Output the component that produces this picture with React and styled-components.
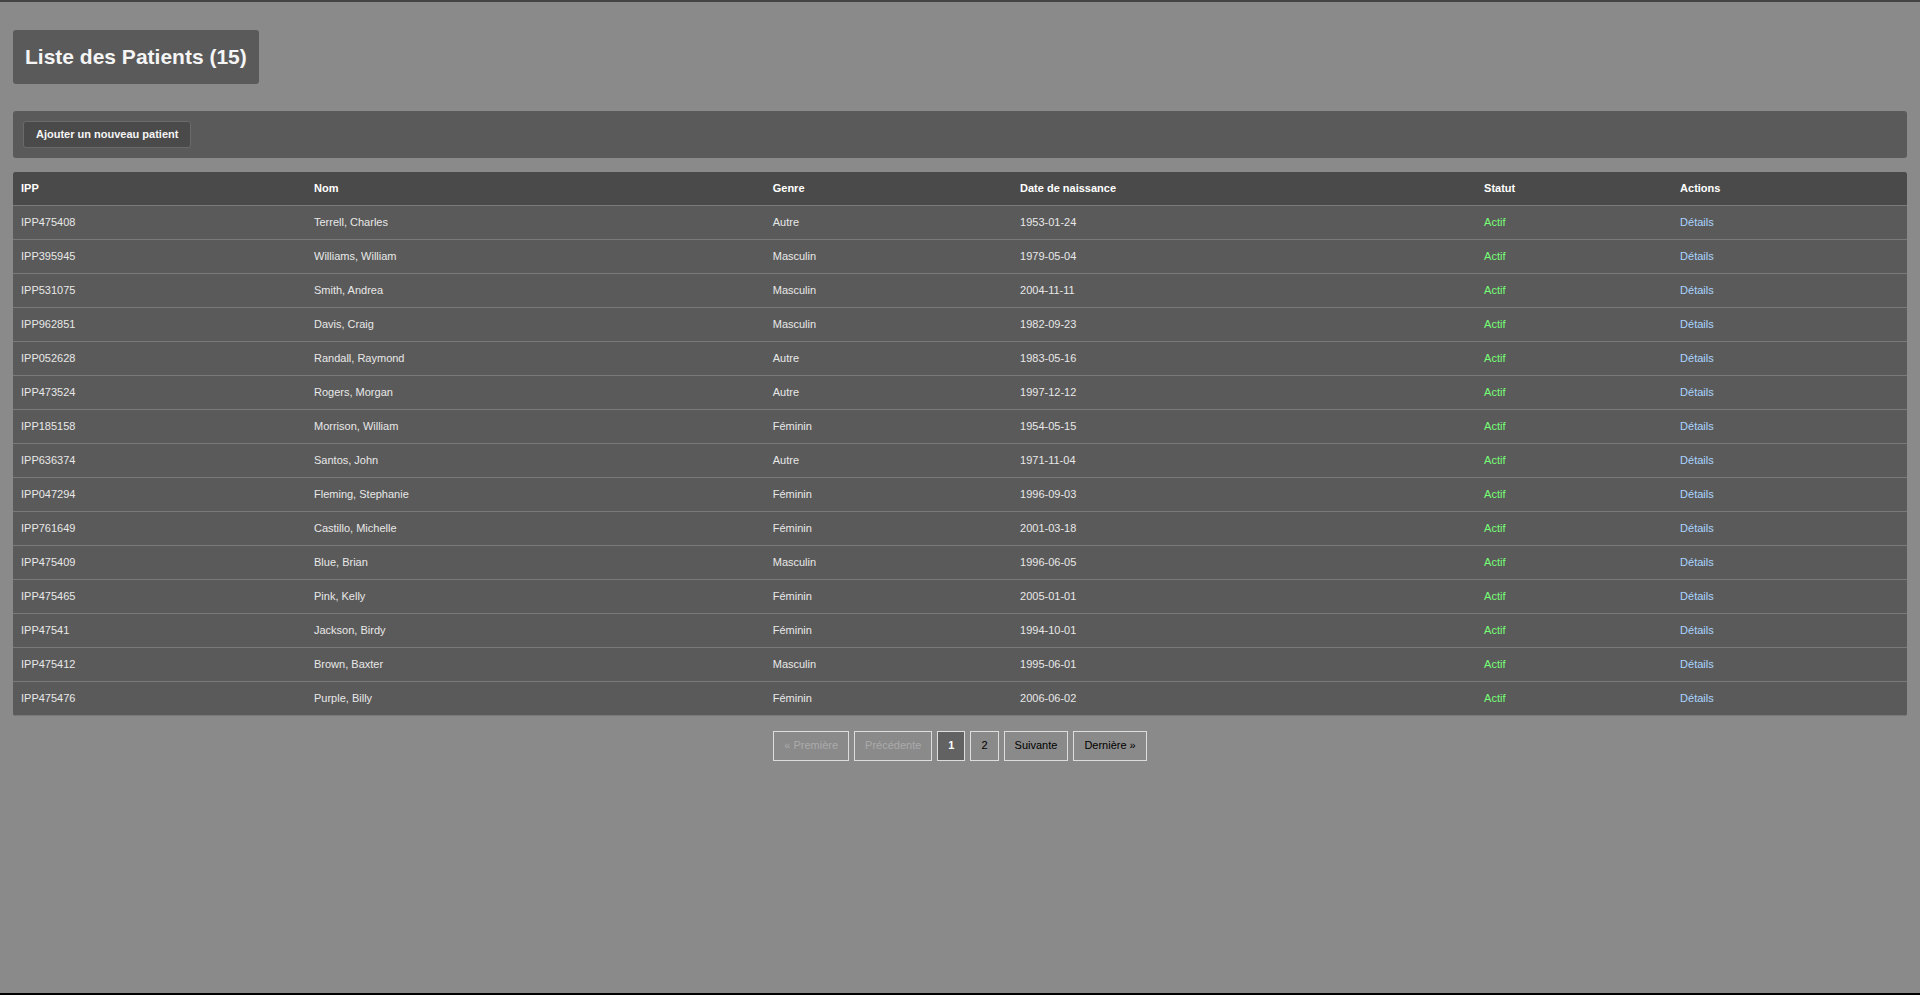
import React from "react";
import styled, { createGlobalStyle } from "styled-components";

const GlobalStyle = createGlobalStyle`
  *, *::before, *::after { box-sizing: border-box; }
  body {
    margin: 0;
    background: #8a8a8a;
    color: #e8e8e8;
    font-family: "Liberation Sans", Arial, sans-serif;
    font-size: 11px;
    line-height: 13px;
  }
`;

const Page = styled.div`
  min-height: 100vh;
  padding: 28px 13px 0;
  border-top: 2px solid #444444;
  border-bottom: 2px solid #000000;
`;

const Title = styled.h1`
  width: fit-content;
  margin: 0 0 27px;
  padding: 15px 12px;
  border-radius: 3px;
  background: #5a5a5a;
  color: #f5f5f5;
  font-size: 21px;
  line-height: 24px;
`;

const Toolbar = styled.div`
  display: flex;
  margin-bottom: 14px;
  padding: 10px;
  border-radius: 3px;
  background: #5a5a5a;
`;

const AddButton = styled.button`
  padding: 6px 12px;
  border: 1px solid #6a6a6a;
  border-radius: 3px;
  background: #4a4a4a;
  color: #f5f5f5;
  font: inherit;
  font-weight: bold;
`;

const Table = styled.table`
  width: 100%;
  table-layout: fixed;
  border-spacing: 0;
  border-radius: 3px;
  overflow: hidden;
  background: #5a5a5a;
`;

const Column = styled.col`
  width: ${(p) => p.$share}%;
`;

const HeadCell = styled.th`
  padding: 10px 8px;
  border-bottom: 1px solid #7a7a7a;
  background: #4a4a4a;
  color: #ffffff;
  text-align: left;
`;

const Cell = styled.td`
  padding: 10px 8px;
  border-bottom: 1px solid #7a7a7a;
`;

const Status = styled.span`
  color: #77ff77;
`;

const DetailLink = styled.a`
  color: #aad4ff;
  text-decoration: none;
`;

const Pager = styled.nav`
  display: flex;
  justify-content: center;
  gap: 5px;
  margin-top: 15px;
`;

const PageButton = styled.button`
  padding: 7px 10px 8px;
  border: 1px solid #dddddd;
  background: ${(p) => (p.$current ? "#626262" : "transparent")};
  color: ${(p) => (p.$current ? "#ffffff" : "#000000")};
  font: inherit;
  font-weight: ${(p) => (p.$current ? "bold" : "normal")};

  &:disabled { color: #aaaaaa; }
`;

const columns = [
  ["IPP", 15.47],
  ["Nom", 24.22],
  ["Genre", 13.06],
  ["Date de naissance", 24.5],
  ["Statut", 10.35],
  ["Actions", 12.4],
];

const patients = [
  ["IPP475408", "Terrell, Charles", "Autre", "1953-01-24"],
  ["IPP395945", "Williams, William", "Masculin", "1979-05-04"],
  ["IPP531075", "Smith, Andrea", "Masculin", "2004-11-11"],
  ["IPP962851", "Davis, Craig", "Masculin", "1982-09-23"],
  ["IPP052628", "Randall, Raymond", "Autre", "1983-05-16"],
  ["IPP473524", "Rogers, Morgan", "Autre", "1997-12-12"],
  ["IPP185158", "Morrison, William", "Féminin", "1954-05-15"],
  ["IPP636374", "Santos, John", "Autre", "1971-11-04"],
  ["IPP047294", "Fleming, Stephanie", "Féminin", "1996-09-03"],
  ["IPP761649", "Castillo, Michelle", "Féminin", "2001-03-18"],
  ["IPP475409", "Blue, Brian", "Masculin", "1996-06-05"],
  ["IPP475465", "Pink, Kelly", "Féminin", "2005-01-01"],
  ["IPP47541", "Jackson, Birdy", "Féminin", "1994-10-01"],
  ["IPP475412", "Brown, Baxter", "Masculin", "1995-06-01"],
  ["IPP475476", "Purple, Billy", "Féminin", "2006-06-02"],
];

export default function App() {
  return (
    <>
      <GlobalStyle />
      <Page>
        <Title>Liste des Patients (15)</Title>
        <Toolbar>
          <AddButton type="button">Ajouter un nouveau patient</AddButton>
        </Toolbar>
        <Table>
          <colgroup>
            {columns.map(([name, share]) => <Column key={name} $share={share} />)}
          </colgroup>
          <thead>
            <tr>
              {columns.map(([name]) => <HeadCell key={name} scope="col">{name}</HeadCell>)}
            </tr>
          </thead>
          <tbody>
            {patients.map((fields) => (
              <tr key={fields[0]}>
                {fields.map((value) => <Cell key={value}>{value}</Cell>)}
                <Cell><Status>Actif</Status></Cell>
                <Cell><DetailLink href={`#${fields[0]}`}>Détails</DetailLink></Cell>
              </tr>
            ))}
          </tbody>
        </Table>
        <Pager aria-label="Pagination">
          <PageButton type="button" disabled>« Première</PageButton>
          <PageButton type="button" disabled>Précédente</PageButton>
          <PageButton type="button" $current aria-current="page">1</PageButton>
          <PageButton type="button">2</PageButton>
          <PageButton type="button">Suivante</PageButton>
          <PageButton type="button">Dernière »</PageButton>
        </Pager>
      </Page>
    </>
  );
}
